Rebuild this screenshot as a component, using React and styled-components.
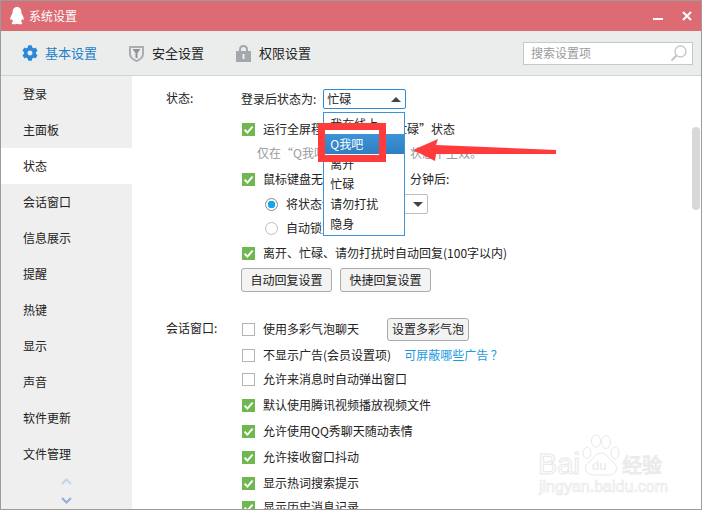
import styled, { createGlobalStyle } from "styled-components"
import { FaCog } from "react-icons/fa"

const GlobalStyle = createGlobalStyle`
    html, body {
        margin: 0;
        padding: 0;
        background: #9b9b9b;
    }
    body {
        font-family: "Noto Sans CJK SC", "Liberation Sans", sans-serif;
        font-size: 12px;
        color: #222;
    }
`

const navItems = ["登录", "主面板", "状态", "会话窗口", "信息展示", "提醒", "热键", "显示", "声音", "软件更新", "文件管理"]
const statusItems = ["我在线上", "Q我吧", "离开", "忙碌", "请勿打扰", "隐身"]

const CheckBox = ({ on }) => (
    <Box $on={on}>
        {on && (
            <svg width="13" height="13" viewBox="0 0 13 13">
                <path d="M2.6 6.6 L5.4 9.6 L10.6 3.6" fill="none" stroke="#fff" strokeWidth="2" />
            </svg>
        )}
    </Box>
)

function App() {
    return <>
      <GlobalStyle />
      <Win>
        <TitleBar>
            <svg width="14" height="18" viewBox="0 0 14 18">
                <path fill="#fff" d="M7 0C3.9 0 2.6 2.4 2.6 5.2 2.6 6 2.4 6.6 1.8 7.6 .9 9.2 0 11 .3 12.6c.2.7.9.3 1.5-.6.2 1 .7 1.9 1.4 2.5C2.2 15 1.6 15.700 1.800 16.400 2.100 17.300 4.800 17.700 7 16.700 9.200 17.700 11.900 17.300 12.200 16.400 12.400 15.700 11.800 15 10.800 14.500 11.500 13.900 12 13 12.200 12c.6.900 1.300 1.300 1.500.6C14 11 13.100 9.200 12.200 7.600 11.600 6.600 11.400 6 11.400 5.200 11.400 2.400 10.100 0 7 0Z" />
            </svg>
            <TitleText>系统设置</TitleText>
            <WinButtons>
                <MinIcon />
                <svg width="10" height="10" viewBox="0 0 10 10">
                    <path d="M1 1 L9 9 M9 1 L1 9" stroke="#fff" strokeWidth="2" />
                </svg>
            </WinButtons>
        </TitleBar>

        <Toolbar>
            <Tab $active $gap="7px">
                <FaCog size={16} color="#2b87da" />
                <LiftedText>基本设置</LiftedText>
            </Tab>
            <Tab>
                <svg width="15" height="17" viewBox="0 0 15 17">
                    <path fill="#a9aeb2" d="M0 1 H15 V9 C15 13 11 15.500 7.500 17 4 15.500 0 13 0 9Z" />
                    <path fill="#eceeee" d="M2 3 H13 V9 C13 12 10 14 7.500 15 5 14 2 12 2 9Z" />
                    <path fill="#8d9397" d="M3.500 4 H11.500 L8.500 8 V13 H6.500 V8Z" />
                </svg>
                <LiftedText>安全设置</LiftedText>
            </Tab>
            <Tab>
                <svg width="15" height="17" viewBox="0 0 15 17">
                    <path fill="none" stroke="#a3a8ac" strokeWidth="2" d="M4 7 V4.500 C4 2.500 5.500 1 7.500 1 S11 2.500 11 4.500 V7" />
                    <rect y="6" width="15" height="11" fill="#a3a8ac" />
                    <rect x="6.500" y="9" width="2" height="5" fill="#eceeee" />
                </svg>
                <LiftedText>权限设置</LiftedText>
            </Tab>
            <SearchBox>
                <LiftedText>搜索设置项</LiftedText>
                <svg width="18" height="18" viewBox="0 0 18 18">
                    <circle cx="10.500" cy="7.500" r="5.500" fill="none" stroke="#c4c4c4" strokeWidth="1.300" />
                    <path d="M6.500 11.500 L1.500 16.500" stroke="#c4c4c4" strokeWidth="2" />
                </svg>
            </SearchBox>
        </Toolbar>

        <Body>
            <Sidebar>
                {navItems.map((item) => (
                    <NavItem key={item} $active={item === "状态"}>{item}</NavItem>
                ))}
                <NavArrows>
                    <svg width="11" height="7" viewBox="0 0 11 7">
                        <path d="M1 6 L5.500 1.500 L10 6" fill="none" stroke="#c4d4e8" strokeWidth="2" />
                    </svg>
                    <svg width="11" height="7" viewBox="0 0 11 7">
                        <path d="M1 1 L5.500 5.500 L10 1" fill="none" stroke="#8fb0d6" strokeWidth="2" />
                    </svg>
                </NavArrows>
            </Sidebar>

            <Content>
                <Section>
                    <SectionLabel>状态:</SectionLabel>
                    <Fields>
                        <Row>
                            登录后状态为:
                            <SelectWrap>
                                <Select $active $width="83px">
                                    忙碌
                                    <TriUp />
                                </Select>
                                <Menu>
                                    {statusItems.map((item) => (
                                        <MenuItem key={item} $active={item === "Q我吧"}>{item}</MenuItem>
                                    ))}
                                </Menu>
                            </SelectWrap>
                        </Row>
                        <Row $gap="10px">
                            <CheckBox on />
                            <span>运行全屏程序时切换为“忙碌”状态</span>
                        </Row>
                        <Hint>仅在“Q我吧”、“我在线上”状态下生效。</Hint>
                        <Row $gap="6px">
                            <CheckBox on />
                            <span>鼠标键盘无操作超过</span>
                            <MinutesInput>10</MinutesInput>
                            <span>分钟后:</span>
                        </Row>
                        <SubRow $gap="5px">
                            <Radio $on />
                            将状态切换为:
                            <RowSelect $width="67px">
                                离开
                                <TriDown />
                            </RowSelect>
                        </SubRow>
                        <SubRow $gap="4px">
                            <Radio />
                            自动锁定QQ
                        </SubRow>
                        <Row $gap="5px">
                            <CheckBox on />
                            <span>离开、忙碌、请勿打扰时自动回复(100字以内)</span>
                        </Row>
                        <ButtonRow>
                            <Button $width="91px">自动回复设置</Button>
                            <Button $width="91px">快捷回复设置</Button>
                        </ButtonRow>
                    </Fields>
                </Section>

                <ChatSection>
                    <SectionLabel>会话窗口:</SectionLabel>
                    <Fields>
                        <Row>
                            <CheckBox />
                            <span>使用多彩气泡聊天</span>
                            <BubbleButton $width="82px">设置多彩气泡</BubbleButton>
                        </Row>
                        <Row $gap="6px">
                            <CheckBox />
                            <span>不显示广告(会员设置项)</span>
                            <LinkText>可屏蔽哪些广告 ？</LinkText>
                        </Row>
                        <Row $gap="4px">
                            <CheckBox />
                            <span>允许来消息时自动弹出窗口</span>
                        </Row>
                        <Row $gap="6px">
                            <CheckBox on />
                            <span>默认使用腾讯视频播放视频文件</span>
                        </Row>
                        <Row $gap="6px">
                            <CheckBox on />
                            <span>允许使用QQ秀聊天随动表情</span>
                        </Row>
                        <Row $gap="6px">
                            <CheckBox on />
                            <span>允许接收窗口抖动</span>
                        </Row>
                        <Row $gap="6px">
                            <CheckBox on />
                            <span>显示热词搜索提示</span>
                        </Row>
                        <Row $gap="4px">
                            <CheckBox on />
                            <span>显示历史消息记录</span>
                        </Row>
                    </Fields>
                </ChatSection>

                <ScrollThumb />
            </Content>
        </Body>

        <RedBox />
        <Arrow width="150" height="30" viewBox="0 0 150 30">
            <polygon fill="#ff3b3b" points="0,12 25,1 23,7 143,12 143,16 23,16 22,23" />
        </Arrow>
        <Watermark>
            <svg width="38" height="42" viewBox="0 0 38 42">
                <g fill="none" stroke="#e8e8e8" strokeWidth="1">
                    <ellipse cx="5" cy="19" rx="4" ry="5.500" />
                    <ellipse cx="14" cy="7" rx="4.500" ry="6" />
                    <ellipse cx="24" cy="8" rx="4.500" ry="6.500" />
                    <ellipse cx="33" cy="19" rx="4" ry="6" />
                    <path d="M19 19 C13 19 12 25 7 28 C1 32 3 41 11 41 H27 C35 41 37 32 31 28 C26 25 25 19 19 19Z" />
                </g>
                <text x="10" y="36" fontSize="13" fontFamily="Liberation Sans" fill="#e8e8e8">du</text>
            </svg>
            <MarkBai>Bai</MarkBai>
            <MarkJing>经验</MarkJing>
            <MarkUrl>jingyan.baidu.com</MarkUrl>
        </Watermark>
      </Win>
    </>
}

export default App

const Win = styled.div`
    position: relative;
    width: 700px;
    height: 508px;
    margin: 1px 0 0 1px;
    display: flex;
    flex-direction: column;
    background: #fff;
    overflow: hidden;
`

const TitleBar = styled.div`
    height: 30px;
    flex-shrink: 0;
    display: flex;
    align-items: center;
    padding: 0 9px;
    background: #dc6b73;
    color: #fff;
`

const TitleText = styled.div`
    margin: 0 0 2px 5px;
    font-size: 12px;
`

const WinButtons = styled.div`
    margin-left: auto;
    margin-bottom: 1px;
    display: flex;
    align-items: center;
    gap: 19px;
`

const MinIcon = styled.div`
    width: 10px;
    height: 2px;
    margin-top: 7px;
    background: #fff;
`

const Toolbar = styled.div`
    height: 44px;
    flex-shrink: 0;
    display: flex;
    align-items: center;
    padding: 0 8px 0 21px;
    background: #ebeded;
    border-bottom: 1px solid #d2d4d4;
`

const Tab = styled.div`
    width: 107px;
    display: flex;
    align-items: center;
    gap: ${(p) => p.$gap || "8px"};
    font-size: 13px;
    color: ${(p) => (p.$active ? "#1f7fc8" : "#222")};
`

const LiftedText = styled.span`
    margin-bottom: 2px;
`

const SearchBox = styled.div`
    width: 170px;
    height: 23px;
    box-sizing: border-box;
    margin-left: auto;
    display: flex;
    align-items: center;
    justify-content: space-between;
    padding: 0 4px 0 7px;
    background: #fff;
    border: 1px solid #c6c8c8;
    color: #9a9a9a;
`

const Body = styled.div`
    flex: 1;
    min-height: 0;
    display: flex;
`

const Sidebar = styled.div`
    width: 131px;
    flex-shrink: 0;
    display: flex;
    flex-direction: column;
    background: #efefef;
`

const NavItem = styled.div`
    height: 36px;
    box-sizing: border-box;
    flex-shrink: 0;
    display: flex;
    align-items: center;
    padding: 0 0 2px 22px;
    background: ${(p) => (p.$active ? "#fff" : "transparent")};
`

const NavArrows = styled.div`
    display: flex;
    flex-direction: column;
    align-items: center;
    gap: 12px;
    padding-top: 6px;
`

const Content = styled.div`
    position: relative;
    flex: 1;
    min-width: 0;
    overflow: hidden;
    padding: 13px 0 0 34px;
    background: #fff;
`

const Section = styled.div`
    display: flex;
`

const ChatSection = styled(Section)`
    margin-top: 27px;
`

const SectionLabel = styled.div`
    width: 75px;
    height: 20px;
    flex-shrink: 0;
    line-height: 18px;
`

const Fields = styled.div`
    display: flex;
    flex-direction: column;
`

const Row = styled.div`
    height: 20px;
    box-sizing: border-box;
    flex-shrink: 0;
    display: flex;
    align-items: center;
    padding-bottom: 2px;
    margin-top: ${(p) => p.$gap || 0};
    white-space: nowrap;
`

const SubRow = styled(Row)`
    padding-left: 24px;
`

const Hint = styled(Row)`
    margin-top: 4px;
    padding-left: 16px;
    color: #9a9a9a;
`

const ButtonRow = styled.div`
    height: 24px;
    flex-shrink: 0;
    display: flex;
    gap: 8px;
    margin-top: 5px;
`

const Button = styled.div`
    width: ${(p) => p.$width};
    box-sizing: border-box;
    display: flex;
    align-items: center;
    justify-content: center;
    padding-bottom: 2px;
    background: #f3f3f3;
    border: 1px solid #ababab;
    border-radius: 3px;
`

const BubbleButton = styled(Button)`
    height: 23px;
    margin: 2px 0 0 28px;
`

const LinkText = styled.span`
    margin-left: 13px;
    color: #1c9ae0;
`

const Box = styled.div`
    width: 13px;
    height: 13px;
    flex-shrink: 0;
    box-sizing: border-box;
    margin: 2px 8px 0 1px;
    display: flex;
    background: ${(p) => (p.$on ? "#6eb84f" : "#fff")};
    border: ${(p) => (p.$on ? "none" : "1px solid #b4b4b4")};
`

const Radio = styled.div`
    width: 13px;
    height: 13px;
    flex-shrink: 0;
    box-sizing: border-box;
    margin: 2px 8px 0 0;
    border-radius: 50%;
    border: 1px solid ${(p) => (p.$on ? "#8a8a8a" : "#bdbdbd")};
    background: ${(p) => (p.$on ? "radial-gradient(circle, #12a5f2 0 3.5px, #fff 4px)" : "#fff")};
`

const SelectWrap = styled.div`
    position: relative;
    margin: 2px 0 0 7px;
`

const Select = styled.div`
    width: ${(p) => p.$width};
    height: 20px;
    box-sizing: border-box;
    display: flex;
    align-items: center;
    justify-content: space-between;
    padding: 0 3px 2px 3px;
    background: #fff;
    border: 1px solid ${(p) => (p.$active ? "#2a8bd8" : "#bdbdbd")};
    border-radius: 2px;
`

const RowSelect = styled(Select)`
    margin-top: 2px;
`

const TriUp = styled.div`
    margin: 2px 1px 0 0;
    border-left: 5px solid transparent;
    border-right: 5px solid transparent;
    border-bottom: 5px solid #444;
`

const TriDown = styled.div`
    margin: 2px 1px 0 0;
    border-left: 5px solid transparent;
    border-right: 5px solid transparent;
    border-top: 5px solid #444;
`

const MinutesInput = styled.div`
    width: 34px;
    height: 20px;
    box-sizing: border-box;
    margin: 2px 5px 0 0;
    border: 1px solid #bdbdbd;
`

const Menu = styled.div`
    position: absolute;
    top: 23px;
    left: 0;
    z-index: 2;
    width: 82px;
    box-sizing: border-box;
    padding: 1px 0;
    background: #fff;
    border: 1px solid #3d92d8;
`

const MenuItem = styled.div`
    height: 20px;
    box-sizing: border-box;
    display: flex;
    align-items: center;
    padding: 0 0 2px 6px;
    color: ${(p) => (p.$active ? "#fff" : "#222")};
    background: ${(p) => (p.$active ? "linear-gradient(#3c93d8, #2f7fc0)" : "transparent")};
`

const ScrollThumb = styled.div`
    position: absolute;
    top: 51px;
    right: 1px;
    width: 8px;
    height: 83px;
    border-radius: 4px;
    background: #d8d8d8;
`

const RedBox = styled.div`
    position: absolute;
    z-index: 3;
    left: 317px;
    top: 122px;
    width: 68px;
    height: 39px;
    box-sizing: border-box;
    border: 7px solid #ff3b3b;
`

const Arrow = styled.svg`
    position: absolute;
    z-index: 3;
    left: 412px;
    top: 137px;
`

const Watermark = styled.div`
    position: absolute;
    z-index: 1;
    left: 537px;
    top: 432px;
    width: 130px;
    height: 64px;
    color: transparent;
    font-family: "Liberation Sans", sans-serif;

    svg {
        position: absolute;
        left: 44px;
        top: 1px;
    }
`

const MarkBai = styled.div`
    position: absolute;
    left: 0;
    top: 16px;
    font-size: 29px;
    line-height: 30px;
    -webkit-text-stroke: 1px #e8e8e8;
`

const MarkJing = styled.div`
    position: absolute;
    left: 84px;
    top: 20px;
    font-family: "Noto Sans CJK SC", sans-serif;
    font-size: 20px;
    line-height: 24px;
    -webkit-text-stroke: 1px #e8e8e8;
`

const MarkUrl = styled.div`
    position: absolute;
    left: 1px;
    top: 45px;
    font-size: 16px;
    line-height: 18px;
    white-space: nowrap;
    -webkit-text-stroke: 0.7px #e8e8e8;
`
